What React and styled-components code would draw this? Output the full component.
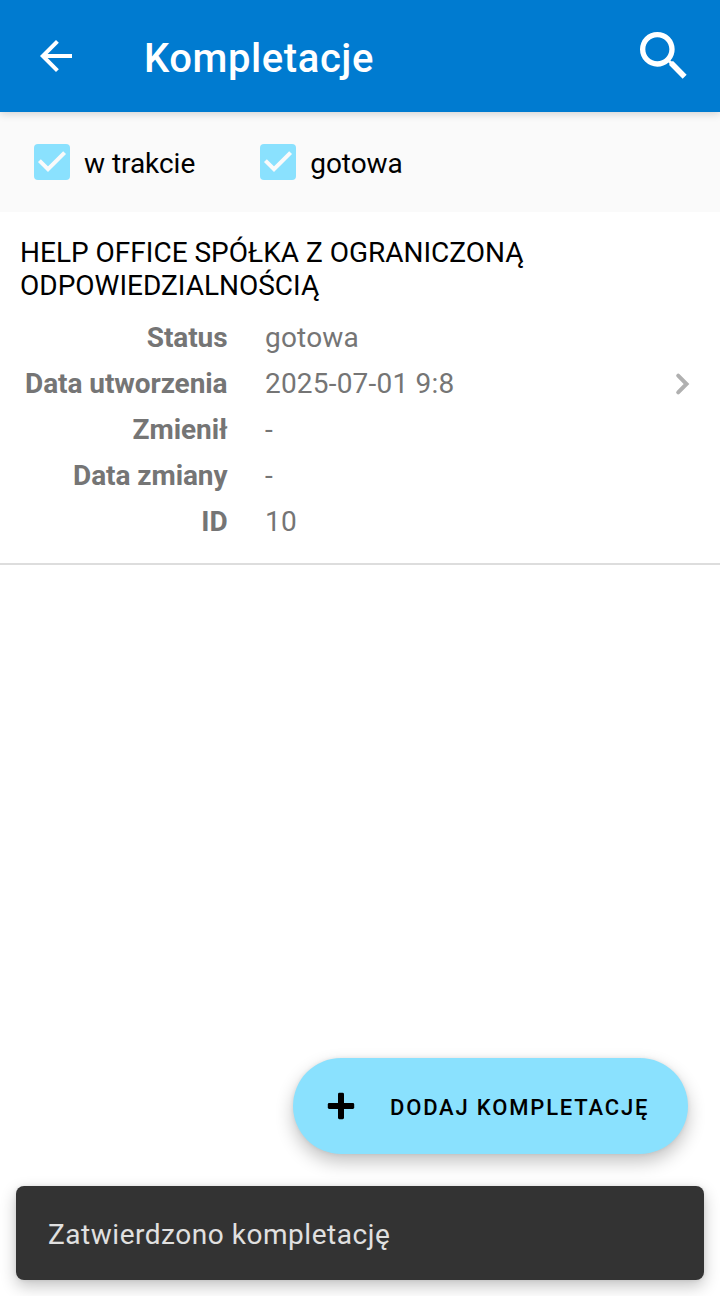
import styled, { createGlobalStyle } from "styled-components"

const items = [
  {
    name: "HELP OFFICE SPÓŁKA Z OGRANICZONĄ ODPOWIEDZIALNOŚCIĄ",
    details: [
      { label: "Status", value: "gotowa" },
      { label: "Data utworzenia", value: "2025-07-01 9:8" },
      { label: "Zmienił", value: "-" },
      { label: "Data zmiany", value: "-" },
      { label: "ID", value: "10" },
    ],
  },
]

function Check({ label }) {
  return (
    <CheckLabel>
      <CheckBox>
        <svg width="36" height="36" viewBox="0 0 36 36">
          <path d="M5.4 16.6L14 25.2L30.6 8.6" fill="none" stroke="#fafafa" strokeWidth="4" />
        </svg>
      </CheckBox>
      <CheckText>{label}</CheckText>
    </CheckLabel>
  )
}

export default function App() {
  return (
    <>
      <GlobalStyle />
      <Screen>
        <Toolbar>
          <BackButton aria-label="Wstecz">
            <svg width="48" height="48" viewBox="0 0 24 24" fill="#fff">
              <path d="M20 11H7.83l5.59-5.59L12 4l-8 8 8 8 1.41-1.41L7.83 13H20v-2z" />
            </svg>
          </BackButton>
          <Title>Kompletacje</Title>
          <SearchButton aria-label="Szukaj">
            <svg width="64" height="64" viewBox="0 0 24 24" fill="#fff">
              <path d="M15.5 14h-.79l-.28-.27A6.471 6.471 0 0 0 16 9.5 6.5 6.5 0 1 0 9.5 16c1.61 0 3.09-.59 4.23-1.57l.27.28v.79l5 4.99L20.49 19l-4.99-5zm-6 0C7.01 14 5 11.99 5 9.5S7.01 5 9.5 5 14 7.01 14 9.5 11.99 14 9.5 14z" />
            </svg>
          </SearchButton>
        </Toolbar>
        <Filters>
          <Check label="w trakcie" />
          <Check label="gotowa" />
        </Filters>
        {items.map((item) => (
          <ListItem key={item.name}>
            <ItemName>{item.name}</ItemName>
            <ItemBody>
              <Details>
                {item.details.map(({ label, value }) => (
                  <Row key={label}>
                    <Label>{label}</Label>
                    <Value>{value}</Value>
                  </Row>
                ))}
              </Details>
              <Chevron width="16" height="24" viewBox="0 0 16 24">
                <path
                  d="M4.2 3.7L12.5 12L4.2 20.3"
                  fill="none"
                  stroke="#b0b0b0"
                  strokeWidth="4"
                  strokeLinecap="round"
                />
              </Chevron>
            </ItemBody>
          </ListItem>
        ))}
        <Footer>
          <AddButton>
            <svg width="28" height="28" viewBox="0 0 28 28">
              <rect x="11" y="0.8" width="6" height="26.4" rx="1.4" />
              <rect x="0.8" y="11" width="26.4" height="6" rx="1.4" />
            </svg>
            <AddText>DODAJ KOMPLETACJĘ</AddText>
          </AddButton>
          <Snackbar>Zatwierdzono kompletację</Snackbar>
        </Footer>
      </Screen>
    </>
  )
}

const GlobalStyle = createGlobalStyle`
  * {
    box-sizing: border-box;
  }

  body {
    margin: 0;
    background: #ffffff;
    font-family: Roboto, sans-serif;
  }

  svg {
    display: block;
    flex: none;
  }

  button {
    border: none;
    padding: 0;
    font-family: inherit;
  }
`

const Screen = styled.div`
  width: 720px;
  height: 1296px;
  display: flex;
  flex-direction: column;
  overflow: hidden;
`

const Toolbar = styled.header`
  height: 112px;
  flex: none;
  display: flex;
  align-items: center;
  padding: 0 24px 0 32px;
  background: #007bd0;
  box-shadow: 0 2px 8px rgba(0, 0, 0, 0.16);
  z-index: 1;
`

const BackButton = styled.button`
  background: none;
`

const Title = styled.h1`
  flex: 1;
  margin: 5px 0 0 64px;
  color: #ffffff;
  font-size: 40px;
  font-weight: 500;
  letter-spacing: 0.58px;
`

const SearchButton = styled.button`
  background: none;
`

const Filters = styled.div`
  height: 100px;
  flex: none;
  display: flex;
  align-items: center;
  gap: 65px;
  padding-left: 34px;
  background: #fafafa;
`

const CheckLabel = styled.label`
  display: flex;
  align-items: center;
  gap: 14px;
  font-size: 28px;
  color: #000000;
`

const CheckBox = styled.span`
  border-radius: 4px;
  background: #8ae1fe;
`

const CheckText = styled.span`
  padding-top: 2px;
  letter-spacing: -0.04px;
`

const ListItem = styled.section`
  height: 353px;
  flex: none;
  padding: 24px 20px 0;
  border-bottom: 2px solid #dddddd;
`

const ItemName = styled.p`
  width: 560px;
  margin: 0 0 12px;
  font-size: 28px;
  line-height: 33px;
  color: #000000;
`

const ItemBody = styled.div`
  display: flex;
  align-items: flex-start;
  justify-content: space-between;
`

const Details = styled.dl`
  margin: 0;
`

const Row = styled.div`
  height: 46px;
  display: flex;
  align-items: center;
  font-size: 28px;
  color: #757575;
`

const Label = styled.dt`
  width: 207.5px;
  font-weight: 700;
  letter-spacing: -0.08px;
  text-align: right;
`

const Value = styled.dd`
  margin: 0 0 0 37.5px;
  letter-spacing: 0.2px;
`

const Chevron = styled.svg`
  margin: 58px 10px 0 0;
`

const Footer = styled.footer`
  margin-top: auto;
  display: flex;
  flex-direction: column;
  align-items: flex-end;
  gap: 32px;
  padding: 0 16px 16px;
`

const AddButton = styled.button`
  width: 395px;
  height: 96px;
  display: flex;
  align-items: center;
  gap: 35px;
  margin-right: 16px;
  padding-left: 34px;
  border-radius: 48px;
  background: #8ae1fe;
  box-shadow: 0 8px 18px rgba(0, 0, 0, 0.24), 0 0 4px rgba(0, 0, 0, 0.08);
  color: #000000;
  font-size: 22px;
  font-weight: 500;
  letter-spacing: 1.82px;
`

const AddText = styled.span`
  padding-top: 2px;
`

const Snackbar = styled.div`
  width: 100%;
  height: 94px;
  display: flex;
  align-items: center;
  padding: 2px 0 0 32px;
  border-radius: 8px;
  background: #333333;
  box-shadow: 0 6px 16px rgba(0, 0, 0, 0.24), 0 0 4px rgba(0, 0, 0, 0.08);
  color: #e0e0e0;
  font-size: 28px;
  letter-spacing: 0.53px;
`
